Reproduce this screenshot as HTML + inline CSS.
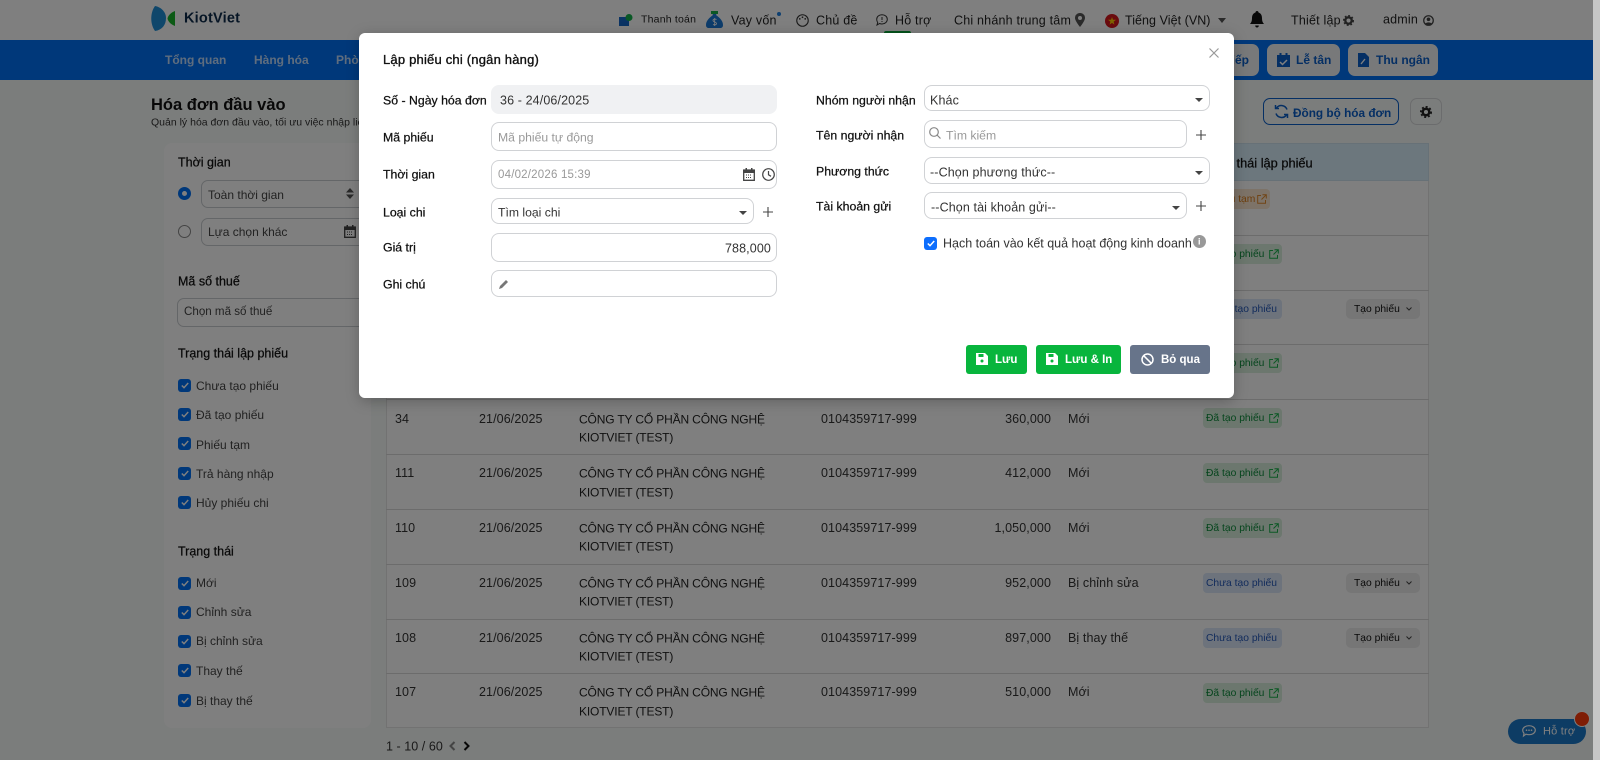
<!DOCTYPE html>
<html lang="vi">
<head>
<meta charset="utf-8">
<title>Hóa đơn đầu vào</title>
<style>
html,body{margin:0;padding:0;width:1600px;height:760px;overflow:hidden;background:#f7faf8;font-family:"Liberation Sans","DejaVu Sans",sans-serif;color:#222}
.t{position:absolute;transform:translateY(calc(-50% + 1px));white-space:nowrap;font-size:12.5px;letter-spacing:.2px;line-height:1.2}
.d{transform:translateY(calc(-50% + 1.5px));letter-spacing:.1px}
.c{font-size:12px;letter-spacing:-.15px}
.s{font-size:12px;letter-spacing:0;color:#444}
.l{font-size:12.3px;letter-spacing:0;color:#111;-webkit-text-stroke:.25px currentColor}
.h{font-size:12.500px}
.v{letter-spacing:.12px;color:#333}
.p{letter-spacing:0;color:#999;font-size:12.2px}
.bt{font-size:10.3px;letter-spacing:0}
.n{font-weight:700;font-size:12px;letter-spacing:0}
.m{-webkit-text-stroke:.35px currentColor}
.b{font-weight:700}
.r{position:absolute;box-sizing:border-box}
svg{position:absolute;overflow:visible}
#page{position:absolute;left:0;top:0;width:1600px;height:760px;overflow:hidden;filter:blur(.35px)}
#ov{position:absolute;left:0;top:0;width:1600px;height:760px;background:rgba(0,0,0,.5)}
#sb{position:absolute;left:1593px;top:0;width:7px;height:760px;background:#c6c6c6}
.line{position:absolute;left:386px;width:1043px;height:1px;background:#d9d9d9}
.badge{position:absolute;left:1203px;width:79px;height:20px;border-radius:4px}
.bg{background:#d8efdd;color:#0c8a3a}
.bb{background:#dbe6f8;color:#2458b8}
.bo{background:#fbe7d0;color:#d97a18}
.btn{position:absolute;left:1346px;width:74px;height:20px;border-radius:5px;background:#ececec}
.cb{position:absolute;left:178px;width:13px;height:13px;border-radius:3px;background:#0070f4}
.field{position:absolute;box-sizing:border-box;border:1px solid #d0d2d5;border-radius:8px;background:#fff}
#modal{position:absolute;left:360px;top:33px;width:874px;height:365px;background:#fff;border-radius:6px;box-shadow:-1px 0 0 #fff,0 3px 14px rgba(0,0,0,.25);filter:blur(.3px)}
.sbtn{position:absolute;top:312px;height:29px;border-radius:3px;background:#08b53d}
.bl{color:#fff;font-size:11.5px;font-weight:700;letter-spacing:0}
</style>
</head>
<body>
<div id="page">
  <!-- top header -->
  <div class="r" style="left:0;top:0;width:1600px;height:40px;background:#fff"></div>
  <svg style="left:151px;top:6px" width="26" height="26" viewBox="0 0 26 26">
    <path d="M4 0C-1 7-1 18 4 25C11 24 15 19 15 12C15 6 10 1 4 0Z" fill="#1f8fd6"/>
    <path d="M24 5L24 20C21 19 17 16 16.500 12.500C17 9 21 6 24 5Z" fill="#18b52a"/>
  </svg>
  <div class="t b" style="left:184px;top:18px;font-size:14.500px;color:#0d2a4a;letter-spacing:.2px">KiotViet</div>

  <svg style="left:619px;top:14px" width="14" height="12" viewBox="0 0 14 12"><rect x="0" y="3" width="10" height="9" fill="#1566c8"/><circle cx="10" cy="3.500" r="3.500" fill="#12b04a"/></svg>
  <div class="t" style="left:641px;top:19px;font-size:10.500px;color:#222">Thanh toán</div>
  <svg style="left:706px;top:11px" width="17" height="17" viewBox="0 0 17 17"><path d="M5 0H12L10 4C14 7 17 10 17 14C17 16 16 17 14 17H3C1 17 0 16 0 14C0 10 3 7 7 4Z" fill="#1a78d6"/><rect x="5" y="0" width="7" height="3" fill="#18b04a"/><path d="M10.500 8.500C9 7.700 7 8 7 9.500C7 11.300 10.500 10.700 10.500 12.500C10.500 14 8.500 14.200 7 13.500M8.700 7V15" fill="none" stroke="#fff" stroke-width=".8"/></svg>
  <div class="t" style="left:731px;top:20px;color:#222">Vay vốn</div>
  <div class="r" style="left:777px;top:12px;width:4px;height:4px;border-radius:50%;background:#1d7fe0"></div>
  <svg style="left:796px;top:14px" width="13" height="13" viewBox="0 0 12 12"><circle cx="6" cy="6" r="5.300" fill="none" stroke="#333" stroke-width="1"/><circle cx="3.500" cy="4.500" r=".8" fill="#333"/><circle cx="6" cy="3" r=".8" fill="#333"/><circle cx="8.500" cy="4.500" r=".8" fill="#333"/></svg>
  <div class="t" style="left:816px;top:20px;color:#222">Chủ đề</div>
  <svg style="left:876px;top:14px" width="12" height="12" viewBox="0 0 12 12"><path d="M6 .7C9 .7 11.300 2.700 11.300 5.300S9 10 6 10C5 10 4.300 9.800 3.500 9.500L1 11L1.700 8.500C1 7.600 .7 6.500 .7 5.300C.7 2.700 3 .7 6 .7Z" fill="none" stroke="#333"/><path d="M6 3V6M6 7V8" stroke="#333"/></svg>
  <div class="t" style="left:895px;top:20px;color:#222">Hỗ trợ</div>
  <div class="r" style="left:884px;top:31px;width:27px;height:3px;background:#0aa83a;border-radius:2px 2px 0 0"></div>
  <div class="t" style="left:954px;top:20px;color:#222">Chi nhánh trung tâm</div>
  <svg style="left:1075px;top:13px" width="10" height="14" viewBox="0 0 10 14"><path d="M5 0C2 0 0 2.200 0 5C0 8 5 14 5 14S10 8 10 5C10 2.200 8 0 5 0Z" fill="#555"/><circle cx="5" cy="5" r="2" fill="#fff"/></svg>
  <div class="r" style="left:1105px;top:14px;width:14px;height:14px;border-radius:50%;background:#d4161c"></div>
  <svg style="left:1108px;top:17px" width="8" height="8" viewBox="0 0 10 10"><path d="M5 0L6.200 3.500H10L7 5.800L8 9.500L5 7.300L2 9.500L3 5.800L0 3.500H3.800Z" fill="#ffcb00"/></svg>
  <div class="t" style="left:1125px;top:20px;color:#222;letter-spacing:.05px">Tiếng Việt (VN)</div>
  <svg style="left:1218px;top:18px" width="8" height="5" viewBox="0 0 8 5"><path d="M0 0H8L4 5Z" fill="#555"/></svg>
  <svg style="left:1250px;top:11px" width="14" height="17" viewBox="0 0 14 17"><path d="M7 0C8 0 8.500 .7 8.500 1.500C11 2.300 12 4.500 12 7C12 10 12.700 11.500 14 13H0C1.300 11.500 2 10 2 7C2 4.500 3 2.300 5.500 1.500C5.500 .7 6 0 7 0Z" fill="#111"/><path d="M5.200 14.500H8.800C8.800 15.800 8 16.500 7 16.500S5.200 15.800 5.200 14.500Z" fill="#111"/></svg>
  <div class="t" style="left:1291px;top:20px;color:#222">Thiết lập</div>
  <svg style="left:1343px;top:15px" width="11" height="11" viewBox="0 0 12 12"><circle cx="6" cy="6" r="3.500" fill="none" stroke="#444" stroke-width="2.500"/><circle cx="6" cy="6" r="5.200" fill="none" stroke="#444" stroke-width="1.600" stroke-dasharray="2 2"/></svg>
  <div class="t" style="left:1383px;top:19px;color:#222">admin</div>
  <svg style="left:1423px;top:15px" width="11" height="11" viewBox="0 0 12 12"><circle cx="6" cy="6" r="5.200" fill="none" stroke="#444" stroke-width="1.400"/><circle cx="6" cy="4.700" r="2" fill="#444"/><path d="M2.500 9.500C3.500 7.500 8.500 7.500 9.500 9.500L6 11Z" fill="#444"/></svg>

  <!-- nav -->
  <div class="r" style="left:0;top:40px;width:1600px;height:40px;background:#0070f4"></div>
  <div class="t n" style="left:165px;top:59px;color:#fff;opacity:.75">Tổng quan</div>
  <div class="t n" style="left:254px;top:59px;color:#fff;opacity:.75">Hàng hóa</div>
  <div class="t n" style="left:336px;top:59px;color:#fff;opacity:.75">Phòng</div>
  <div class="r" style="left:1180px;top:44px;width:79px;height:32px;border-radius:7px;background:#f0f2f5"></div>
  <div class="t n" style="right:351px;top:59px;color:#0a5ec8">iếp</div>
  <div class="r" style="left:1267px;top:44px;width:73px;height:32px;border-radius:7px;background:#f0f2f5"></div>
  <svg style="left:1277px;top:53px" width="13" height="14" viewBox="0 0 13 14"><path d="M0 2H13V14H0Z" fill="#0a5ec8"/><rect x="2.500" y="0" width="2" height="3" fill="#0a5ec8"/><rect x="8.500" y="0" width="2" height="3" fill="#0a5ec8"/><path d="M3 9L5.500 11.500L10 7" stroke="#fff" stroke-width="1.500" fill="none"/></svg>
  <div class="t n" style="left:1296px;top:59px;color:#0a5ec8">Lễ tân</div>
  <div class="r" style="left:1348px;top:44px;width:90px;height:32px;border-radius:7px;background:#f0f2f5"></div>
  <svg style="left:1358px;top:53px" width="11" height="14" viewBox="0 0 11 14"><path d="M0 0H7L11 4V14H0Z" fill="#0a5ec8"/><path d="M3 11L7 6" stroke="#fff" stroke-width="1.400"/></svg>
  <div class="t n" style="left:1376px;top:59px;color:#0a5ec8">Thu ngân</div>

  <!-- page title -->
  <div class="t b" style="left:151px;top:105px;font-size:16.500px;color:#111;letter-spacing:0">Hóa đơn đầu vào</div>
  <div class="t" style="left:151px;top:122px;font-size:10.500px;color:#333;letter-spacing:0">Quản lý hóa đơn đầu vào, tối ưu việc nhập liệu</div>
  <div class="r" style="left:1263px;top:98px;width:136px;height:27px;border:1px solid #0a5ec8;border-radius:7px;background:#f7faf8"></div>
  <svg style="left:1274px;top:104px" width="15" height="15" viewBox="0 0 15 15"><path d="M13 5.500A6 6 0 0 0 2.500 4M2 9.500A6 6 0 0 0 12.500 11" fill="none" stroke="#0a5ec8" stroke-width="1.500"/><path d="M1.500 1V4.500H5M13.500 14V10.500H10" fill="none" stroke="#0a5ec8" stroke-width="1.500"/></svg>
  <div class="t n" style="left:1293px;top:112px;color:#0a5ec8;font-size:11.800px">Đồng bộ hóa đơn</div>
  <div class="r" style="left:1410px;top:98px;width:32px;height:27px;border:1px solid #d6d8da;border-radius:7px"></div>
  <svg style="left:1420px;top:106px" width="12" height="12" viewBox="0 0 12 12"><circle cx="6" cy="6" r="3.300" fill="none" stroke="#222" stroke-width="2.500"/><circle cx="6" cy="6" r="5.200" fill="none" stroke="#222" stroke-width="1.600" stroke-dasharray="2 2"/></svg>

  <!-- left panel -->
  <div class="r" style="left:164px;top:143px;width:207px;height:585px;background:#fff;border-radius:8px"></div>
  <div class="t l h" style="left:178px;top:162px">Thời gian</div>
  <div class="r" style="left:178px;top:187px;width:13px;height:13px;border-radius:50%;border:4px solid #0070f4;background:#fff"></div>
  <div class="r" style="left:201px;top:180px;width:170px;height:28px;border:1px solid #c9ccd0;border-radius:7px"></div>
  <div class="t s" style="left:208px;top:194px">Toàn thời gian</div>
  <svg style="left:346px;top:188px" width="8" height="11" viewBox="0 0 8 11"><path d="M4 0L8 4.500H0ZM0 6.500H8L4 11Z" fill="#555"/></svg>
  <div class="r" style="left:178px;top:225px;width:13px;height:13px;border-radius:50%;border:1px solid #888;background:#fff"></div>
  <div class="r" style="left:201px;top:218px;width:170px;height:28px;border:1px solid #c9ccd0;border-radius:7px"></div>
  <div class="t s" style="left:208px;top:231px">Lựa chọn khác</div>
  <svg style="left:344px;top:225px" width="12" height="13" viewBox="0 0 12 13"><path d="M.7 2H11.300V12.300H.7Z" fill="none" stroke="#444" stroke-width="1.300"/><rect y="2" width="12" height="3" fill="#444"/><path d="M3 7H9M3 9.500H9" stroke="#444" stroke-dasharray="1 1"/><rect x="2.500" width="1.500" height="3" fill="#444"/><rect x="8" width="1.500" height="3" fill="#444"/></svg>
  <div class="t l h" style="left:178px;top:281px">Mã số thuế</div>
  <div class="r" style="left:177px;top:298px;width:194px;height:29px;border:1px solid #c9ccd0;border-radius:7px"></div>
  <div class="t s" style="left:184px;top:311px;font-size:11.600px">Chọn mã số thuế</div>
  <div class="t l h" style="left:178px;top:353px">Trạng thái lập phiếu</div>
  <div class="cb" style="top:379px"></div><svg style="left:181px;top:382px" width="8" height="7" viewBox="0 0 8 7"><path d="M.8 3.500L3 5.700L7.200 1" fill="none" stroke="#fff" stroke-width="1.500"/></svg><div class="t s" style="left:196px;top:385px">Chưa tạo phiếu</div>
  <div class="cb" style="top:408px"></div><svg style="left:181px;top:411px" width="8" height="7" viewBox="0 0 8 7"><path d="M.8 3.500L3 5.700L7.200 1" fill="none" stroke="#fff" stroke-width="1.500"/></svg><div class="t s" style="left:196px;top:414px">Đã tạo phiếu</div>
  <div class="cb" style="top:437px"></div><svg style="left:181px;top:440px" width="8" height="7" viewBox="0 0 8 7"><path d="M.8 3.500L3 5.700L7.200 1" fill="none" stroke="#fff" stroke-width="1.500"/></svg><div class="t s" style="left:196px;top:444px">Phiếu tạm</div>
  <div class="cb" style="top:467px"></div><svg style="left:181px;top:470px" width="8" height="7" viewBox="0 0 8 7"><path d="M.8 3.500L3 5.700L7.200 1" fill="none" stroke="#fff" stroke-width="1.500"/></svg><div class="t s" style="left:196px;top:473px">Trả hàng nhập</div>
  <div class="cb" style="top:496px"></div><svg style="left:181px;top:499px" width="8" height="7" viewBox="0 0 8 7"><path d="M.8 3.500L3 5.700L7.200 1" fill="none" stroke="#fff" stroke-width="1.500"/></svg><div class="t s" style="left:196px;top:502px">Hủy phiếu chi</div>
  <div class="t l h" style="left:178px;top:551px">Trạng thái</div>
  <div class="cb" style="top:577px"></div><svg style="left:181px;top:580px" width="8" height="7" viewBox="0 0 8 7"><path d="M.8 3.500L3 5.700L7.200 1" fill="none" stroke="#fff" stroke-width="1.500"/></svg><div class="t s" style="left:196px;top:582px">Mới</div>
  <div class="cb" style="top:606px"></div><svg style="left:181px;top:609px" width="8" height="7" viewBox="0 0 8 7"><path d="M.8 3.500L3 5.700L7.200 1" fill="none" stroke="#fff" stroke-width="1.500"/></svg><div class="t s" style="left:196px;top:611px">Chỉnh sửa</div>
  <div class="cb" style="top:635px"></div><svg style="left:181px;top:638px" width="8" height="7" viewBox="0 0 8 7"><path d="M.8 3.500L3 5.700L7.200 1" fill="none" stroke="#fff" stroke-width="1.500"/></svg><div class="t s" style="left:196px;top:640px">Bị chỉnh sửa</div>
  <div class="cb" style="top:664px"></div><svg style="left:181px;top:667px" width="8" height="7" viewBox="0 0 8 7"><path d="M.8 3.500L3 5.700L7.200 1" fill="none" stroke="#fff" stroke-width="1.500"/></svg><div class="t s" style="left:196px;top:670px">Thay thế</div>
  <div class="cb" style="top:694px"></div><svg style="left:181px;top:697px" width="8" height="7" viewBox="0 0 8 7"><path d="M.8 3.500L3 5.700L7.200 1" fill="none" stroke="#fff" stroke-width="1.500"/></svg><div class="t s" style="left:196px;top:700px">Bị thay thế</div>

  <!-- table -->
  <div class="r" style="left:386px;top:143px;width:1043px;height:585px;background:#fff;border:1px solid #e4e4e4"></div>
  <div class="r" style="left:386px;top:143px;width:1043px;height:38px;background:#d9eefa;border:1px solid #cfe3ef"></div>
  <div class="t l" style="left:1200px;top:162px;font-size:12.800px">Trạng thái lập phiếu</div>
  <div class="line" style="top:235px"></div>
  <div class="line" style="top:290px"></div>
  <div class="line" style="top:344px"></div>
  <div class="line" style="top:399px"></div>
  <div class="line" style="top:454px"></div>
  <div class="line" style="top:509px"></div>
  <div class="line" style="top:564px"></div>
  <div class="line" style="top:619px"></div>
  <div class="line" style="top:673px"></div>

  <!-- badges in rows under the modal edge -->
  <div class="badge bo" style="top:189px;width:67px"></div><div class="t bt" style="left:1209px;top:199px;color:#d97a18">Phiếu tạm</div>
  <svg style="left:1257px;top:194px" width="10" height="10" viewBox="0 0 10 10"><path d="M4 1.500H.7V9.300H8.500V6M5.500 .7H9.300V4.500M9.300 .7L4.500 5.500" fill="none" stroke="#e28a2c"/></svg>
  <div class="badge bg" style="top:244px"></div><div class="t bt" style="left:1206px;top:254px;color:#0c8a3a">Đã tạo phiếu</div>
  <svg style="left:1269px;top:249px" width="10" height="10" viewBox="0 0 10 10"><path d="M4 1.500H.7V9.300H8.500V6M5.500 .7H9.300V4.500M9.300 .7L4.500 5.500" fill="none" stroke="#18b04a"/></svg>
  <div class="badge bb" style="top:299px"></div><div class="t bt" style="left:1206px;top:309px;color:#2458b8">Chưa tạo phiếu</div>
  <div class="btn" style="top:299px"></div><div class="t bt" style="left:1354px;top:309px;color:#111">Tạo phiếu</div>
  <svg style="left:1406px;top:307px" width="6" height="4" viewBox="0 0 6 4"><path d="M.5 .5L3 3L5.500 .5" fill="none" stroke="#444"/></svg>
  <div class="badge bg" style="top:353px"></div><div class="t bt" style="left:1206px;top:363px;color:#0c8a3a">Đã tạo phiếu</div>
  <svg style="left:1269px;top:358px" width="10" height="10" viewBox="0 0 10 10"><path d="M4 1.500H.7V9.300H8.500V6M5.500 .7H9.300V4.500M9.300 .7L4.500 5.500" fill="none" stroke="#18b04a"/></svg>

  <!-- row 34 -->
  <div class="t d" style="left:395px;top:418px;color:#333">34</div>
  <div class="t d" style="left:479px;top:418px;color:#333">21/06/2025</div>
  <div class="t d c" style="left:579px;top:418px;color:#222">CÔNG TY CỔ PHẦN CÔNG NGHỆ</div>
  <div class="t d c" style="left:579px;top:436px;color:#222">KIOTVIET (TEST)</div>
  <div class="t d" style="left:821px;top:418px;color:#333">0104359717-999</div>
  <div class="t d" style="right:549px;top:418px;color:#333">360,000</div>
  <div class="t d" style="left:1068px;top:418px;color:#333">Mới</div>
  <div class="badge bg" style="top:408px"></div><div class="t bt" style="left:1206px;top:418px;color:#0c8a3a">Đã tạo phiếu</div>
  <svg style="left:1269px;top:413px" width="10" height="10" viewBox="0 0 10 10"><path d="M4 1.500H.7V9.300H8.500V6M5.500 .7H9.300V4.500M9.300 .7L4.500 5.500" fill="none" stroke="#18b04a"/></svg>
  <!-- row 111 -->
  <div class="t d" style="left:395px;top:472px;color:#333">111</div>
  <div class="t d" style="left:479px;top:472px;color:#333">21/06/2025</div>
  <div class="t d c" style="left:579px;top:472px;color:#222">CÔNG TY CỔ PHẦN CÔNG NGHỆ</div>
  <div class="t d c" style="left:579px;top:491px;color:#222">KIOTVIET (TEST)</div>
  <div class="t d" style="left:821px;top:472px;color:#333">0104359717-999</div>
  <div class="t d" style="right:549px;top:472px;color:#333">412,000</div>
  <div class="t d" style="left:1068px;top:472px;color:#333">Mới</div>
  <div class="badge bg" style="top:463px"></div><div class="t bt" style="left:1206px;top:473px;color:#0c8a3a">Đã tạo phiếu</div>
  <svg style="left:1269px;top:468px" width="10" height="10" viewBox="0 0 10 10"><path d="M4 1.500H.7V9.300H8.500V6M5.500 .7H9.300V4.500M9.300 .7L4.500 5.500" fill="none" stroke="#18b04a"/></svg>
  <!-- row 110 -->
  <div class="t d" style="left:395px;top:527px;color:#333">110</div>
  <div class="t d" style="left:479px;top:527px;color:#333">21/06/2025</div>
  <div class="t d c" style="left:579px;top:527px;color:#222">CÔNG TY CỔ PHẦN CÔNG NGHỆ</div>
  <div class="t d c" style="left:579px;top:545px;color:#222">KIOTVIET (TEST)</div>
  <div class="t d" style="left:821px;top:527px;color:#333">0104359717-999</div>
  <div class="t d" style="right:549px;top:527px;color:#333">1,050,000</div>
  <div class="t d" style="left:1068px;top:527px;color:#333">Mới</div>
  <div class="badge bg" style="top:518px"></div><div class="t bt" style="left:1206px;top:528px;color:#0c8a3a">Đã tạo phiếu</div>
  <svg style="left:1269px;top:523px" width="10" height="10" viewBox="0 0 10 10"><path d="M4 1.500H.7V9.300H8.500V6M5.500 .7H9.300V4.500M9.300 .7L4.500 5.500" fill="none" stroke="#18b04a"/></svg>
  <!-- row 109 -->
  <div class="t d" style="left:395px;top:582px;color:#333">109</div>
  <div class="t d" style="left:479px;top:582px;color:#333">21/06/2025</div>
  <div class="t d c" style="left:579px;top:582px;color:#222">CÔNG TY CỔ PHẦN CÔNG NGHỆ</div>
  <div class="t d c" style="left:579px;top:600px;color:#222">KIOTVIET (TEST)</div>
  <div class="t d" style="left:821px;top:582px;color:#333">0104359717-999</div>
  <div class="t d" style="right:549px;top:582px;color:#333">952,000</div>
  <div class="t d" style="left:1068px;top:582px;color:#333">Bị chỉnh sửa</div>
  <div class="badge bb" style="top:573px"></div><div class="t bt" style="left:1206px;top:583px;color:#2458b8">Chưa tạo phiếu</div>
  <div class="btn" style="top:573px"></div><div class="t bt" style="left:1354px;top:583px;color:#111">Tạo phiếu</div>
  <svg style="left:1406px;top:581px" width="6" height="4" viewBox="0 0 6 4"><path d="M.5 .5L3 3L5.500 .5" fill="none" stroke="#444"/></svg>
  <!-- row 108 -->
  <div class="t d" style="left:395px;top:637px;color:#333">108</div>
  <div class="t d" style="left:479px;top:637px;color:#333">21/06/2025</div>
  <div class="t d c" style="left:579px;top:637px;color:#222">CÔNG TY CỔ PHẦN CÔNG NGHỆ</div>
  <div class="t d c" style="left:579px;top:655px;color:#222">KIOTVIET (TEST)</div>
  <div class="t d" style="left:821px;top:637px;color:#333">0104359717-999</div>
  <div class="t d" style="right:549px;top:637px;color:#333">897,000</div>
  <div class="t d" style="left:1068px;top:637px;color:#333">Bị thay thế</div>
  <div class="badge bb" style="top:628px"></div><div class="t bt" style="left:1206px;top:638px;color:#2458b8">Chưa tạo phiếu</div>
  <div class="btn" style="top:628px"></div><div class="t bt" style="left:1354px;top:638px;color:#111">Tạo phiếu</div>
  <svg style="left:1406px;top:636px" width="6" height="4" viewBox="0 0 6 4"><path d="M.5 .5L3 3L5.500 .5" fill="none" stroke="#444"/></svg>
  <!-- row 107 -->
  <div class="t d" style="left:395px;top:691px;color:#333">107</div>
  <div class="t d" style="left:479px;top:691px;color:#333">21/06/2025</div>
  <div class="t d c" style="left:579px;top:691px;color:#222">CÔNG TY CỔ PHẦN CÔNG NGHỆ</div>
  <div class="t d c" style="left:579px;top:710px;color:#222">KIOTVIET (TEST)</div>
  <div class="t d" style="left:821px;top:691px;color:#333">0104359717-999</div>
  <div class="t d" style="right:549px;top:691px;color:#333">510,000</div>
  <div class="t d" style="left:1068px;top:691px;color:#333">Mới</div>
  <div class="badge bg" style="top:683px"></div><div class="t bt" style="left:1206px;top:693px;color:#0c8a3a">Đã tạo phiếu</div>
  <svg style="left:1269px;top:688px" width="10" height="10" viewBox="0 0 10 10"><path d="M4 1.500H.7V9.300H8.500V6M5.500 .7H9.300V4.500M9.300 .7L4.500 5.500" fill="none" stroke="#18b04a"/></svg>

  <!-- pagination -->
  <div class="t" style="left:386px;top:746px;color:#333;letter-spacing:.05px">1 - 10 / 60</div>
  <svg style="left:449px;top:741px" width="7" height="10" viewBox="0 0 7 10"><path d="M5.500 1L1.500 5L5.500 9" fill="none" stroke="#888" stroke-width="2"/></svg>
  <svg style="left:463px;top:741px" width="7" height="10" viewBox="0 0 7 10"><path d="M1.500 1L5.500 5L1.500 9" fill="none" stroke="#111" stroke-width="2"/></svg>

  <!-- support -->
  <div class="r" style="left:1508px;top:719px;width:78px;height:25px;border-radius:13px;background:#1a78c8"></div>
  <svg style="left:1522px;top:725px" width="14" height="12" viewBox="0 0 14 12"><path d="M7 .7C10.500 .7 13.300 2.700 13.300 5.300S10.500 9.700 7 9.700C6 9.700 5 9.500 4 9.200L1.500 11L2 8.300C1.200 7.500 .7 6.500 .7 5.300C.7 2.700 3.500 .7 7 .7Z" fill="none" stroke="#fff" stroke-width="1.200"/><circle cx="4.500" cy="5.200" r=".8" fill="#fff"/><circle cx="7" cy="5.200" r=".8" fill="#fff"/><circle cx="9.500" cy="5.200" r=".8" fill="#fff"/></svg>
  <div class="t" style="left:1543px;top:731px;font-size:11px;color:#fff">Hỗ trợ</div>
  <div class="r" style="left:1574px;top:711px;width:16px;height:16px;border-radius:50%;background:#ff3a0a;border:1.500px solid #fff"></div>
</div>

<div id="ov"></div>
<div id="sb"></div>

<div id="modal">
  <svg style="left:849px;top:15px" width="10" height="10" viewBox="0 0 10 10"><path d="M.5 .5L9.500 9.500M9.500 .5L.5 9.500" stroke="#999" stroke-width="1.200"/></svg>
  <div class="t m" style="left:23px;top:26px;font-size:13px;color:#111">Lập phiếu chi (ngân hàng)</div>

  <div class="t l" style="left:23px;top:67px">Số - Ngày hóa đơn</div>
  <div class="field" style="left:131px;top:52px;width:286px;height:29px;background:#f0f1f3;border-color:#f0f1f3"></div>
  <div class="t v" style="left:140px;top:67px">36 - 24/06/2025</div>

  <div class="t l" style="left:23px;top:104px">Mã phiếu</div>
  <div class="field" style="left:131px;top:89px;width:286px;height:29px"></div>
  <div class="t p" style="left:138px;top:104px">Mã phiếu tự động</div>

  <div class="t l" style="left:23px;top:141px">Thời gian</div>
  <div class="field" style="left:131px;top:127px;width:286px;height:29px"></div>
  <div class="t" style="left:138px;top:142px;color:#999;font-size:11.500px">04/02/2026 15:39</div>
  <svg style="left:383px;top:135px" width="12" height="13" viewBox="0 0 12 13"><path d="M.7 2H11.300V12.300H.7Z" fill="none" stroke="#444" stroke-width="1.300"/><rect y="2" width="12" height="3" fill="#444"/><path d="M3 7H9M3 9.500H9" stroke="#444" stroke-dasharray="1 1"/><rect x="2.500" width="1.500" height="3" fill="#444"/><rect x="8" width="1.500" height="3" fill="#444"/></svg>
  <svg style="left:402px;top:135px" width="13" height="13" viewBox="0 0 13 13"><circle cx="6.500" cy="6.500" r="5.800" fill="none" stroke="#444" stroke-width="1.200"/><path d="M6.500 3V6.800L9 8.300" fill="none" stroke="#444" stroke-width="1.200"/></svg>

  <div class="t l" style="left:23px;top:179px">Loại chi</div>
  <div class="field" style="left:131px;top:165px;width:263px;height:26px"></div>
  <div class="t v" style="left:138px;top:179px;letter-spacing:0;font-size:12.200px">Tìm loại chi</div>
  <svg style="left:379px;top:178px" width="8" height="4" viewBox="0 0 8 4"><path d="M0 0H8L4 4Z" fill="#444"/></svg>
  <svg style="left:403px;top:174px" width="10" height="10" viewBox="0 0 11 11"><path d="M5.500 0V11M0 5.500H11" stroke="#444" stroke-width="1.200"/></svg>

  <div class="t l" style="left:23px;top:214px">Giá trị</div>
  <div class="field" style="left:131px;top:200px;width:286px;height:29px"></div>
  <div class="t v" style="right:463px;top:215px">788,000</div>

  <div class="t l" style="left:23px;top:251px">Ghi chú</div>
  <div class="field" style="left:131px;top:237px;width:286px;height:27px"></div>
  <svg style="left:139px;top:246px" width="10" height="10" viewBox="0 0 10 10"><path d="M0 10L1 7L7 1L9 3L3 9Z" fill="#777"/></svg>

  <div class="t l" style="left:456px;top:67px">Nhóm người nhận</div>
  <div class="field" style="left:564px;top:52px;width:286px;height:26px"></div>
  <div class="t v" style="left:570px;top:67px">Khác</div>
  <svg style="left:835px;top:65px" width="8" height="4" viewBox="0 0 8 4"><path d="M0 0H8L4 4Z" fill="#444"/></svg>

  <div class="t l" style="left:456px;top:102px">Tên người nhận</div>
  <div class="field" style="left:564px;top:87px;width:263px;height:28px"></div>
  <svg style="left:569px;top:94px" width="12" height="12" viewBox="0 0 12 12"><circle cx="5" cy="5" r="4.300" fill="none" stroke="#888" stroke-width="1.200"/><path d="M8 8L11.500 11.500" stroke="#888" stroke-width="1.200"/></svg>
  <div class="t p" style="left:586px;top:102px">Tìm kiếm</div>
  <svg style="left:836px;top:97px" width="10" height="10" viewBox="0 0 11 11"><path d="M5.500 0V11M0 5.500H11" stroke="#444" stroke-width="1.200"/></svg>

  <div class="t l" style="left:456px;top:138px">Phương thức</div>
  <div class="field" style="left:564px;top:124px;width:286px;height:27px"></div>
  <div class="t v" style="left:570px;top:139px">--Chọn phương thức--</div>
  <svg style="left:835px;top:138px" width="8" height="4" viewBox="0 0 8 4"><path d="M0 0H8L4 4Z" fill="#444"/></svg>

  <div class="t l" style="left:456px;top:173px">Tài khoản gửi</div>
  <div class="field" style="left:564px;top:159px;width:263px;height:27px"></div>
  <div class="t v" style="left:571px;top:174px">--Chọn tài khoản gửi--</div>
  <svg style="left:812px;top:173px" width="8" height="4" viewBox="0 0 8 4"><path d="M0 0H8L4 4Z" fill="#444"/></svg>
  <svg style="left:836px;top:168px" width="10" height="10" viewBox="0 0 11 11"><path d="M5.500 0V11M0 5.500H11" stroke="#444" stroke-width="1.200"/></svg>

  <div class="r" style="left:564px;top:204px;width:13px;height:13px;border-radius:3px;background:#0d6efd"></div>
  <svg style="left:567px;top:207px" width="8" height="7" viewBox="0 0 8 7"><path d="M.8 3.500L3 5.700L7.200 1" fill="none" stroke="#fff" stroke-width="1.500"/></svg>
  <div class="t v" style="left:583px;top:210px;letter-spacing:0">Hạch toán vào kết quả hoạt động kinh doanh</div>
  <div class="r" style="left:833px;top:202px;width:13px;height:13px;border-radius:50%;background:#999"></div>
  <div class="t b" style="left:838px;top:208px;font-size:9px;color:#fff;letter-spacing:0">i</div>

  <div class="sbtn" style="left:606px;width:61px"></div>
  <svg style="left:616px;top:320px" width="12" height="12" viewBox="0 0 12 12"><path d="M0 0H9L12 3V12H0Z" fill="#fff"/><rect x="2.500" y="1" width="5" height="3" fill="#08b53d"/><circle cx="6" cy="8" r="1.500" fill="#08b53d"/></svg>
  <div class="t bl" style="left:635px;top:326.500px">Lưu</div>
  <div class="sbtn" style="left:676px;width:85px"></div>
  <svg style="left:686px;top:320px" width="12" height="12" viewBox="0 0 12 12"><path d="M0 0H9L12 3V12H0Z" fill="#fff"/><rect x="2.500" y="1" width="5" height="3" fill="#08b53d"/><circle cx="6" cy="8" r="1.500" fill="#08b53d"/></svg>
  <div class="t bl" style="left:705px;top:326.500px">Lưu &amp; In</div>
  <div class="sbtn" style="left:770px;width:80px;background:#67748a"></div>
  <svg style="left:781px;top:320px" width="13" height="13" viewBox="0 0 13 13"><circle cx="6.500" cy="6.500" r="5.500" fill="none" stroke="#fff" stroke-width="1.500"/><path d="M2.700 2.700L10.300 10.300" stroke="#fff" stroke-width="1.500"/></svg>
  <div class="t bl" style="left:801px;top:326.500px">Bỏ qua</div>
</div>
</body>
</html>
